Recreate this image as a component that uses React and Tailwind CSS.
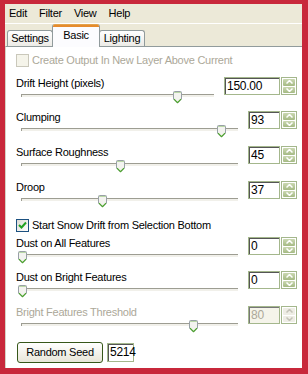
import React from 'react'

const Thumb = ({ left }) => (
  <svg className="absolute top-[1px]" style={{ left }} width="9" height="13" viewBox="0 0 9 13">
    <path d="M1.5 0.5 h6 a1 1 0 0 1 1 1 v6.5 l-4 4 l-4 -4 v-6.5 a1 1 0 0 1 1 -1z" fill="#F3F3EF" stroke="#98A0A6" />
    <path d="M1 1.5 h7" stroke="#B9D7A6" />
    <path d="M1 8.2 l3.5 3.5 l3.5 -3.5" fill="none" stroke="#4CA52C" strokeWidth="1.2" />
  </svg>
)

const Spin = ({ value, width, disabled }) => (
  <div className="flex gap-[1px] h-[18px] mt-[1px]">
    <div className={`border border-[#A4B78C] h-full ${disabled ? 'bg-[#F5F4EA]' : 'bg-white'}`} style={{ width }}>
      <div className={`h-full pl-[2px] leading-[16px] text-[12px] shadow-[inset_1px_1px_0_#555] ${disabled ? 'text-[#ACA899] shadow-[inset_1px_1px_0_#777]' : 'text-black'}`}>{value}</div>
    </div>
    <div className="w-[16px] h-full flex flex-col gap-[1px] border border-[#A4B78C] p-[1px]">
      {['up', 'down'].map((d) => (
        <div key={d} className={`flex-1 flex items-center justify-center rounded-[1px] ${disabled ? 'bg-[#EEEDE5]' : 'bg-gradient-to-b from-[#CBD8B2] to-[#A5BA84]'}`}>
          <svg width="7" height="4" viewBox="0 0 7 4">
            {d === 'up'
              ? <path d="M0.5 3.5 L3.5 0.5 L6.5 3.5" fill="none" stroke={disabled ? '#C4C3B8' : '#fff'} strokeWidth="1.5" />
              : <path d="M0.5 0.5 L3.5 3.5 L6.5 0.5" fill="none" stroke={disabled ? '#C4C3B8' : '#fff'} strokeWidth="1.5" />}
          </svg>
        </div>
      ))}
    </div>
  </div>
)

const Param = ({ label, value, width = 32, thumb, disabled, h = 'h-[35px]' }) => (
  <div className={`flex ${h}`}>
    <div className="flex-1 mr-[10px] flex flex-col">
      <div className={`h-[14px] leading-[14px] ${disabled ? 'text-[#ACA899]' : 'text-black'}`}>{label}</div>
      <div className="relative h-[20px]">
        <div className="ml-[5px] mt-[4px] h-[3px] border-t border-l border-[#9D9D92] bg-[#F1F0EA] border-b-white" />
        <Thumb left={thumb} />
      </div>
    </div>
    <Spin value={value} width={width} disabled={disabled} />
  </div>
)

const Check = ({ checked, disabled, label }) => (
  <div className="flex items-center h-[13px]">
    <div className={`w-[13px] h-[13px] border flex items-center justify-center ${disabled ? 'border-[#CAC8BB] bg-[#F5F4EA]' : 'border-[#1C5180] bg-gradient-to-br from-[#DCDBD4] to-white'}`}>
      {checked && (
        <svg width="9" height="9" viewBox="0 0 9 9">
          <path d="M1 4 L3.5 6.5 L8 1.5" fill="none" stroke="#21A121" strokeWidth="2" />
        </svg>
      )}
    </div>
    <span className={`ml-[3px] ${disabled ? 'text-[#ACA899]' : 'text-black'}`}>{label}</span>
  </div>
)

export default function App() {
  return (
    <div className="w-[308px] h-[374px] bg-[#C8283B] pl-[5px] pt-[4px] pr-[6px] pb-[6px] font-['Liberation_Sans',Arial,sans-serif] text-[11px] tracking-[-0.25px]">
      <div className="h-full flex flex-col bg-[#ECE9D8]">
        <div className="h-[19px] flex items-center gap-[12px] pl-[4px] text-black border-b border-white box-content">
          <span>Edit</span>
          <span>Filter</span>
          <span>View</span>
          <span>Help</span>
        </div>
        <div className="h-[22px] flex items-end pl-[2px]">
          <div className="w-[46px] h-[16px] border border-b-0 border-[#919B9C] rounded-t-[3px] bg-gradient-to-b from-white to-[#ECEBE6] flex items-center justify-center">Settings</div>
          <div className="relative z-10 w-[48px] h-[23px] -mb-[1px] -mx-[1px] border-x border-[#919B9C] rounded-t-[3px] bg-[#FCFCFE] flex flex-col">
            <div className="h-[3px] rounded-t-[2px] bg-[#E68B2C] border-t border-[#E2A34C]" />
            <div className="flex-1 flex items-center justify-center pb-[3px]">Basic</div>
          </div>
          <div className="w-[46px] h-[16px] border border-b-0 border-[#919B9C] rounded-t-[3px] bg-gradient-to-b from-white to-[#ECEBE6] flex items-center justify-center">Lighting</div>
        </div>
        <div className="flex-1 bg-white border-t border-[#919B9C] border-l border-l-[#D5D3C6] pl-[10px] pr-[5px] pt-[7px] flex flex-col">
          <Check disabled label="Create Output In New Layer Above Current" />
          <div className="mt-[9px]">
            <Param label="Drift Height (pixels)" value="150.00" width={56} thumb={157} h="h-[34px]" />
            <Param label="Clumping" value="93" thumb={201} />
            <Param label="Surface Roughness" value="45" thumb={100} />
            <Param label="Droop" value="37" thumb={82} />
          </div>
          <div className="mt-[4px]">
            <Check checked label="Start Snow Drift from Selection Bottom" />
          </div>
          <div className="mt-[4px]">
            <Param label="Dust on All Features" value="0" thumb={2} h="h-[34px]" />
            <Param label="Dust on Bright Features" value="0" thumb={2} />
            <Param label="Bright Features Threshold" value="80" thumb={173} disabled />
          </div>
          <div className="flex items-center gap-[4px] mt-[2px] ml-[1px]">
            <button className="w-[86px] h-[21px] border border-[#37571A] rounded-[3px] bg-gradient-to-b from-white to-[#E8E6D8] text-black">Random Seed</button>
            <div className="w-[27px] h-[19px] border border-[#A4B78C]">
              <div className="h-full pl-[2px] leading-[17px] text-[12px] shadow-[inset_1px_1px_0_#555]">5214</div>
            </div>
          </div>
        </div>
      </div>
    </div>
  )
}
